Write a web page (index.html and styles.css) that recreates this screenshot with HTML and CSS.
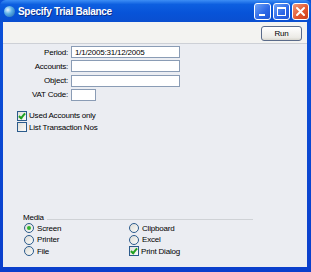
FILE: index.html
```html
<!DOCTYPE html>
<html lang="en">
<head>
  <meta charset="UTF-8" />
  <title>Specify Trial Balance</title>
  <link rel="stylesheet" href="styles.css">
</head>
<body>
  <div class="window">
    <div class="titlebar">
      <span class="app-icon"></span>
      <span class="title">Specify Trial Balance</span>
      <div class="caption-buttons">
        <span class="cap-btn min"><span class="min-bar"></span></span>
        <span class="cap-btn max"><span class="max-box"></span></span>
        <span class="cap-btn close">
          <svg width="15" height="15" viewBox="0 0 15 15"><path d="M4 4 L11 11 M11 4 L4 11" stroke="#fff" stroke-width="2" stroke-linecap="round"/></svg>
        </span>
      </div>
    </div>

    <div class="client">
      <div class="toolbar">
        <button class="run">Run</button>
      </div>

      <div class="form">
        <div class="fields">
          <label>Period:</label>
          <input class="wide" type="text" value="1/1/2005:31/12/2005">
          <label>Accounts:</label>
          <input class="wide" type="text">
          <label>Object:</label>
          <input class="wide" type="text">
          <label>VAT Code:</label>
          <input class="short" type="text">
        </div>

        <div class="checks">
          <div class="opt"><span class="box checked"></span>Used Accounts only</div>
          <div class="opt"><span class="box"></span>List Transaction Nos</div>
        </div>

        <div class="media">
          <div class="group-head"><span>Media</span><span class="rule"></span></div>
          <div class="media-grid">
            <div class="opt"><span class="radio on"></span>Screen</div>
            <div class="opt"><span class="radio"></span>Clipboard</div>
            <div class="opt"><span class="radio"></span>Printer</div>
            <div class="opt"><span class="radio"></span>Excel</div>
            <div class="opt"><span class="radio"></span>File</div>
            <div class="opt"><span class="box checked"></span>Print Dialog</div>
          </div>
        </div>
      </div>
    </div>
  </div>
</body>
</html>
```

FILE: styles.css
```css
body {
  margin: 0;
  font-family: "Liberation Sans", Arial, sans-serif;
  font-size: 8px;
  letter-spacing: -0.2px;
  color: #000;
}

.window {
  width: 311px;
  height: 272px;
  display: flex;
  flex-direction: column;
  background: linear-gradient(#0b52d9, #0a3fcc);
  padding: 0 4px 5px 3px;
  box-sizing: border-box;
}

/* title bar */
.titlebar {
  height: 22px;
  margin: 0 -4px 0 -3px;
  padding: 0 2px 0 4px;
  display: flex;
  align-items: center;
  background: linear-gradient(#3d8ef5 0%, #0d5fe0 20%, #0753d8 60%, #0a4fd0 100%);
  border-radius: 6px 6px 0 0;
}

.app-icon {
  width: 11px;
  height: 11px;
  border-radius: 50%;
  background: radial-gradient(circle at 35% 35%, #e8f4ff 0%, #5ab0e8 40%, #1d5fa8 100%);
  margin-right: 3px;
}

.title {
  font-weight: bold;
  font-size: 10px;
  letter-spacing: -0.3px;
  color: #fff;
  text-shadow: 1px 1px 0 #0a2f8a;
}

.caption-buttons {
  margin-left: auto;
  display: flex;
  gap: 2px;
}

.cap-btn {
  width: 15px;
  height: 15px;
  border: 1px solid #fff;
  border-radius: 3px;
  background: linear-gradient(135deg, #6fa3f7, #2a66e6 60%, #1f55d3);
  display: flex;
  align-items: center;
  justify-content: center;
  position: relative;
}

.cap-btn.close {
  background: linear-gradient(135deg, #f09a7d, #e1542c 60%, #c93d1a);
}

.min-bar {
  position: absolute;
  left: 4px;
  bottom: 3px;
  width: 6px;
  height: 2px;
  background: #fff;
}

.max-box {
  width: 7px;
  height: 6px;
  border: 1px solid #fff;
  border-top-width: 2px;
}

/* client area */
.client {
  flex: 1;
  display: flex;
  flex-direction: column;
  background: #ebedf2;
}

.toolbar {
  height: 21px;
  display: flex;
  align-items: center;
  justify-content: flex-end;
  padding-right: 5px;
  background: #f3f3f1;
  border-bottom: 1px solid #cdd0d6;
}

.run {
  width: 41px;
  height: 15px;
  margin-top: 1px;
  font-family: inherit;
  font-size: 8px;
  letter-spacing: -0.2px;
  border: 1px solid #5a6b8a;
  border-radius: 3px;
  background: linear-gradient(#ffffff, #ecebe6 80%, #d8d6cd);
  padding: 0;
}

.form {
  flex: 1;
  display: flex;
  flex-direction: column;
  padding: 2px 0 11px 0;
}

.fields {
  display: grid;
  grid-template-columns: 65px auto;
  column-gap: 3px;
  row-gap: 2.3px;
  align-items: center;
  justify-items: start;
}

.fields label {
  justify-self: end;
}

.fields input {
  height: 12px;
  box-sizing: border-box;
  border: 1px solid #8a9cb5;
  background: #fff;
  font-family: inherit;
  font-size: 8px;
  letter-spacing: -0.2px;
  padding: 0 3px;
  margin: 0;
  outline: none;
}

.fields .wide {
  width: 109px;
}

.fields .short {
  width: 25px;
}

.checks {
  margin-top: 10px;
  padding-left: 14px;
  display: flex;
  flex-direction: column;
  gap: 1.5px;
}

.opt {
  display: flex;
  align-items: center;
  gap: 2px;
  height: 10px;
}

.box {
  width: 10px;
  height: 10px;
  box-sizing: border-box;
  border: 1px solid #2b5b8c;
  background: linear-gradient(135deg, #e0e0da, #fbfbf9);
  position: relative;
}

.box.checked::after {
  content: "";
  position: absolute;
  left: 2px;
  top: 0px;
  width: 2px;
  height: 5px;
  border: solid #21a121;
  border-width: 0 2px 2px 0;
  transform: rotate(40deg);
}

.radio {
  width: 10px;
  height: 10px;
  box-sizing: border-box;
  border: 1px solid #2b5b8c;
  border-radius: 50%;
  background: linear-gradient(135deg, #dcdcd6, #fbfbf9);
  margin-right: 1px;
  display: flex;
  align-items: center;
  justify-content: center;
}

.radio.on::after {
  content: "";
  width: 4px;
  height: 4px;
  border-radius: 50%;
  background: #2fb32f;
}

.media {
  margin-top: auto;
  padding-left: 20px;
}

.group-head {
  width: 230px;
  display: flex;
  align-items: center;
  gap: 3px;
  margin-bottom: 1px;
}

.group-head .rule {
  flex: 1;
  height: 1px;
  background: #cfd2d6;
  margin-top: 3px;
}

.media-grid {
  display: grid;
  grid-template-columns: 105px 105px;
  row-gap: 1.3px;
  padding-left: 1px;
}
```
